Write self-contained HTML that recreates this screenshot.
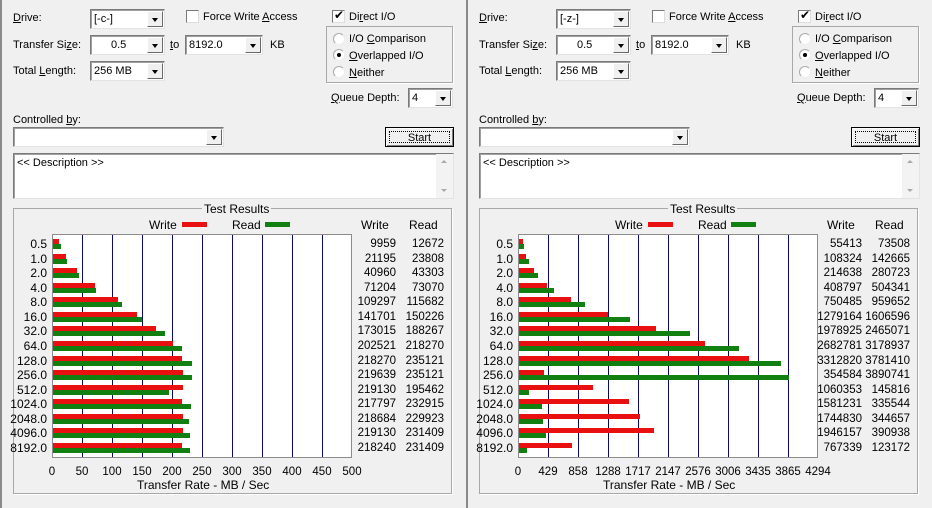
<!DOCTYPE html>
<html><head><meta charset="utf-8"><style>
*{margin:0;padding:0;box-sizing:border-box}
body{width:932px;height:508px;background:#f0f0f0;font-family:"Liberation Sans",sans-serif;font-size:11px;color:#000;position:relative;overflow:hidden}
.p{position:absolute;top:0;width:466px;height:508px;border-left:2px solid #8a8a8a}
.in{position:absolute;left:-2px;top:0;width:466px;height:508px}
.a{position:absolute;white-space:nowrap;line-height:14px}
.cb{position:absolute;background:#fff;border:1px solid #7a7a7a;border-right-color:#e3e3e3;border-bottom-color:#e3e3e3;box-shadow:inset 1px 1px 0 #a0a0a0}
.cb span{position:absolute;left:3px;top:2px;line-height:14px}
.cb i{position:absolute;right:1px;top:1px;bottom:1px;width:16px;background:#f0f0f0;border:1px solid;border-color:#fff #6a6a6a #6a6a6a #fff}
.cb i:after{content:"";position:absolute;left:4px;top:6px;border:3px solid transparent;border-top:4px solid #000;border-bottom:0}
.chk{position:absolute;width:13px;height:13px;background:#fff;border:1px solid #7a7a7a;border-right-color:#ddd;border-bottom-color:#ddd}
.rd{position:absolute;width:12px;height:12px;border-radius:50%;background:#fff;border:1px solid #aaa;border-right-color:#eee;border-bottom-color:#eee}
u{text-decoration:underline}
.plot{position:absolute;left:52px;top:234px;width:300px;height:224px;background:#fff;border:1px solid #8c8c8c}
.g{position:absolute;top:0;bottom:0;width:1px;background:#0a0a70}
.w{position:absolute;height:5px;background:#e81010;left:53px}
.r{position:absolute;height:5px;background:#118011;left:53px}
.lb{position:absolute;right:419px;white-space:nowrap;line-height:14px;font-size:12px}
.v1{position:absolute;right:70px;line-height:14px;font-size:11.5px}
.v2{position:absolute;right:22px;line-height:14px;font-size:11.5px}
.ax{position:absolute;top:465px;width:40px;margin-left:-20px;text-align:center;line-height:14px;font-size:11.5px}
</style></head><body>

<!-- LEFT PANEL -->
<div class="p" style="left:0">
<div class="in">
<div class="a" style="left:13px;top:11px"><u>D</u>rive:</div>
<div class="cb" style="left:90px;top:9px;width:75px;height:20px"><span>[-c-]</span><i></i></div>
<div class="chk" style="left:186px;top:10px"></div>
<div class="a" style="left:203px;top:10px">Force Write <u>A</u>ccess</div>
<div class="chk" style="left:332px;top:10px"><div style="position:absolute;left:1px;top:-3px;font-size:12px;line-height:14px">✔</div></div>
<div class="a" style="left:349px;top:10px">Di<u>r</u>ect I/O</div>
<div style="position:absolute;left:326px;top:26px;width:127px;height:57px;border:1px solid #a8a8a8;box-shadow:1px 1px 0 #fff"></div>
<div class="rd" style="left:333px;top:33px"></div><div class="a" style="left:349px;top:32px">I/O <u>C</u>omparison</div>
<div class="rd" style="left:333px;top:49px"><div style="position:absolute;left:3px;top:3px;width:4px;height:4px;border-radius:50%;background:#000"></div></div><div class="a" style="left:349px;top:49px"><u>O</u>verlapped I/O</div>
<div class="rd" style="left:333px;top:66px"></div><div class="a" style="left:349px;top:66px"><u>N</u>either</div>
<div class="a" style="left:13px;top:38px">Transfer Si<u>z</u>e:</div>
<div class="cb" style="left:90px;top:35px;width:75px;height:20px"><span style="left:20px">0.5</span><i></i></div>
<div class="a" style="left:170px;top:38px"><u>t</u>o</div>
<div class="cb" style="left:185px;top:35px;width:78px;height:20px"><span>8192.0</span><i></i></div>
<div class="a" style="left:270px;top:38px">KB</div>
<div class="a" style="left:13px;top:64px">Total <u>L</u>ength:</div>
<div class="cb" style="left:90px;top:61px;width:75px;height:20px"><span>256 MB</span><i></i></div>
<div class="a" style="left:331px;top:91px"><u>Q</u>ueue Depth:</div>
<div class="cb" style="left:408px;top:88px;width:45px;height:20px"><span>4</span><i></i></div>
<div class="a" style="left:13px;top:113px">Controlled <u>b</u>y:</div>
<div class="cb" style="left:13px;top:127px;width:211px;height:20px"><span></span><i></i></div>
<div style="position:absolute;left:385px;top:127px;width:69px;height:20px;border:1px solid #000;background:#f0f0f0;box-shadow:inset 1px 1px 0 #fff,inset -1px -1px 0 #808080"><div style="position:absolute;left:3px;top:3px;right:3px;bottom:3px;border:1px dotted #000;text-align:center;line-height:12px">Start</div></div>
<div class="cb" style="left:13px;top:153px;width:441px;height:46px;box-shadow:inset 1px 1px 0 #a0a0a0"><span style="top:2px">&lt;&lt; Description &gt;&gt;</span>
<div style="position:absolute;right:0;top:0;bottom:0;width:17px;background:#f3f3f3"><div style="position:absolute;left:5px;top:6px;border:3px solid transparent;border-bottom:3px solid #aaa;border-top:0"></div><div style="position:absolute;left:5px;bottom:6px;border:3px solid transparent;border-top:3px solid #aaa;border-bottom:0"></div></div></div>
<div style="position:absolute;left:13px;top:208px;width:439px;height:286px;border:1px solid #a8a8a8;box-shadow:1px 1px 0 #fff"></div>
<div class="a" style="left:202px;top:202px;background:#f0f0f0;padding:0 2px;font-size:12px">Test Results</div>
<div class="a" style="left:149px;top:218px;font-size:12px">Write</div><div style="position:absolute;left:182px;top:222px;width:25px;height:5px;background:#e81010"></div>
<div class="a" style="left:232px;top:218px;font-size:12px">Read</div><div style="position:absolute;left:265px;top:222px;width:25px;height:5px;background:#118011"></div>
<div class="a" style="left:361px;top:218px;font-size:12px">Write</div><div class="a" style="left:409px;top:218px;font-size:12px">Read</div>
<div class="plot"><div class="g" style="left:29px"></div><div class="g" style="left:59px"></div><div class="g" style="left:89px"></div><div class="g" style="left:119px"></div><div class="g" style="left:149px"></div><div class="g" style="left:179px"></div><div class="g" style="left:209px"></div><div class="g" style="left:239px"></div><div class="g" style="left:269px"></div></div>
<div class="w" style="top:239px;width:6px"></div><div class="r" style="top:244px;width:8px"></div>
<div class="w" style="top:254px;width:13px"></div><div class="r" style="top:259px;width:14px"></div>
<div class="w" style="top:268px;width:24px"></div><div class="r" style="top:273px;width:26px"></div>
<div class="w" style="top:283px;width:42px"></div><div class="r" style="top:288px;width:43px"></div>
<div class="w" style="top:297px;width:65px"></div><div class="r" style="top:302px;width:69px"></div>
<div class="w" style="top:312px;width:84px"></div><div class="r" style="top:317px;width:89px"></div>
<div class="w" style="top:326px;width:103px"></div><div class="r" style="top:331px;width:112px"></div>
<div class="w" style="top:341px;width:120px"></div><div class="r" style="top:346px;width:129px"></div>
<div class="w" style="top:356px;width:129px"></div><div class="r" style="top:361px;width:139px"></div>
<div class="w" style="top:370px;width:130px"></div><div class="r" style="top:375px;width:139px"></div>
<div class="w" style="top:385px;width:130px"></div><div class="r" style="top:390px;width:116px"></div>
<div class="w" style="top:399px;width:129px"></div><div class="r" style="top:404px;width:138px"></div>
<div class="w" style="top:414px;width:130px"></div><div class="r" style="top:419px;width:136px"></div>
<div class="w" style="top:428px;width:130px"></div><div class="r" style="top:433px;width:137px"></div>
<div class="w" style="top:443px;width:129px"></div><div class="r" style="top:448px;width:137px"></div>
<div class="lb" style="top:237px">0.5</div><div class="v1" style="top:237px">9959</div><div class="v2" style="top:237px">12672</div>
<div class="lb" style="top:252px">1.0</div><div class="v1" style="top:252px">21195</div><div class="v2" style="top:252px">23808</div>
<div class="lb" style="top:266px">2.0</div><div class="v1" style="top:266px">40960</div><div class="v2" style="top:266px">43303</div>
<div class="lb" style="top:281px">4.0</div><div class="v1" style="top:281px">71204</div><div class="v2" style="top:281px">73070</div>
<div class="lb" style="top:295px">8.0</div><div class="v1" style="top:295px">109297</div><div class="v2" style="top:295px">115682</div>
<div class="lb" style="top:310px">16.0</div><div class="v1" style="top:310px">141701</div><div class="v2" style="top:310px">150226</div>
<div class="lb" style="top:324px">32.0</div><div class="v1" style="top:324px">173015</div><div class="v2" style="top:324px">188267</div>
<div class="lb" style="top:339px">64.0</div><div class="v1" style="top:339px">202521</div><div class="v2" style="top:339px">218270</div>
<div class="lb" style="top:354px">128.0</div><div class="v1" style="top:354px">218270</div><div class="v2" style="top:354px">235121</div>
<div class="lb" style="top:368px">256.0</div><div class="v1" style="top:368px">219639</div><div class="v2" style="top:368px">235121</div>
<div class="lb" style="top:383px">512.0</div><div class="v1" style="top:383px">219130</div><div class="v2" style="top:383px">195462</div>
<div class="lb" style="top:397px">1024.0</div><div class="v1" style="top:397px">217797</div><div class="v2" style="top:397px">232915</div>
<div class="lb" style="top:412px">2048.0</div><div class="v1" style="top:412px">218684</div><div class="v2" style="top:412px">229923</div>
<div class="lb" style="top:426px">4096.0</div><div class="v1" style="top:426px">219130</div><div class="v2" style="top:426px">231409</div>
<div class="lb" style="top:441px">8192.0</div><div class="v1" style="top:441px">218240</div><div class="v2" style="top:441px">231409</div>
<div class="ax" style="left:52px">0</div><div class="ax" style="left:82px">50</div><div class="ax" style="left:112px">100</div><div class="ax" style="left:142px">150</div><div class="ax" style="left:172px">200</div><div class="ax" style="left:202px">250</div><div class="ax" style="left:232px">300</div><div class="ax" style="left:262px">350</div><div class="ax" style="left:292px">400</div><div class="ax" style="left:322px">450</div><div class="ax" style="left:352px">500</div>
<div class="a" style="left:137px;top:478px;font-size:12px">Transfer Rate - MB / Sec</div>
</div></div>

<!-- RIGHT PANEL -->
<div class="p" style="left:466px">
<div class="in">
<div class="a" style="left:13px;top:11px"><u>D</u>rive:</div>
<div class="cb" style="left:90px;top:9px;width:75px;height:20px"><span>[-z-]</span><i></i></div>
<div class="chk" style="left:186px;top:10px"></div>
<div class="a" style="left:203px;top:10px">Force Write <u>A</u>ccess</div>
<div class="chk" style="left:332px;top:10px"><div style="position:absolute;left:1px;top:-3px;font-size:12px;line-height:14px">✔</div></div>
<div class="a" style="left:349px;top:10px">Di<u>r</u>ect I/O</div>
<div style="position:absolute;left:326px;top:26px;width:127px;height:57px;border:1px solid #a8a8a8;box-shadow:1px 1px 0 #fff"></div>
<div class="rd" style="left:333px;top:33px"></div><div class="a" style="left:349px;top:32px">I/O <u>C</u>omparison</div>
<div class="rd" style="left:333px;top:49px"><div style="position:absolute;left:3px;top:3px;width:4px;height:4px;border-radius:50%;background:#000"></div></div><div class="a" style="left:349px;top:49px"><u>O</u>verlapped I/O</div>
<div class="rd" style="left:333px;top:66px"></div><div class="a" style="left:349px;top:66px"><u>N</u>either</div>
<div class="a" style="left:13px;top:38px">Transfer Si<u>z</u>e:</div>
<div class="cb" style="left:90px;top:35px;width:75px;height:20px"><span style="left:20px">0.5</span><i></i></div>
<div class="a" style="left:170px;top:38px"><u>t</u>o</div>
<div class="cb" style="left:185px;top:35px;width:78px;height:20px"><span>8192.0</span><i></i></div>
<div class="a" style="left:270px;top:38px">KB</div>
<div class="a" style="left:13px;top:64px">Total <u>L</u>ength:</div>
<div class="cb" style="left:90px;top:61px;width:75px;height:20px"><span>256 MB</span><i></i></div>
<div class="a" style="left:331px;top:91px"><u>Q</u>ueue Depth:</div>
<div class="cb" style="left:408px;top:88px;width:45px;height:20px"><span>4</span><i></i></div>
<div class="a" style="left:13px;top:113px">Controlled <u>b</u>y:</div>
<div class="cb" style="left:13px;top:127px;width:211px;height:20px"><span></span><i></i></div>
<div style="position:absolute;left:385px;top:127px;width:69px;height:20px;border:1px solid #000;background:#f0f0f0;box-shadow:inset 1px 1px 0 #fff,inset -1px -1px 0 #808080"><div style="position:absolute;left:3px;top:3px;right:3px;bottom:3px;border:1px dotted #000;text-align:center;line-height:12px">Start</div></div>
<div class="cb" style="left:13px;top:153px;width:441px;height:46px;box-shadow:inset 1px 1px 0 #a0a0a0"><span style="top:2px">&lt;&lt; Description &gt;&gt;</span>
<div style="position:absolute;right:0;top:0;bottom:0;width:17px;background:#f3f3f3"><div style="position:absolute;left:5px;top:6px;border:3px solid transparent;border-bottom:3px solid #aaa;border-top:0"></div><div style="position:absolute;left:5px;bottom:6px;border:3px solid transparent;border-top:3px solid #aaa;border-bottom:0"></div></div></div>
<div style="position:absolute;left:13px;top:208px;width:439px;height:286px;border:1px solid #a8a8a8;box-shadow:1px 1px 0 #fff"></div>
<div class="a" style="left:202px;top:202px;background:#f0f0f0;padding:0 2px;font-size:12px">Test Results</div>
<div class="a" style="left:149px;top:218px;font-size:12px">Write</div><div style="position:absolute;left:182px;top:222px;width:25px;height:5px;background:#e81010"></div>
<div class="a" style="left:232px;top:218px;font-size:12px">Read</div><div style="position:absolute;left:265px;top:222px;width:25px;height:5px;background:#118011"></div>
<div class="a" style="left:361px;top:218px;font-size:12px">Write</div><div class="a" style="left:409px;top:218px;font-size:12px">Read</div>
<div class="plot"><div class="g" style="left:29px"></div><div class="g" style="left:59px"></div><div class="g" style="left:89px"></div><div class="g" style="left:119px"></div><div class="g" style="left:149px"></div><div class="g" style="left:179px"></div><div class="g" style="left:209px"></div><div class="g" style="left:239px"></div><div class="g" style="left:269px"></div></div>
<div class="w" style="top:239px;width:4px"></div><div class="r" style="top:244px;width:5px"></div>
<div class="w" style="top:254px;width:7px"></div><div class="r" style="top:259px;width:10px"></div>
<div class="w" style="top:268px;width:15px"></div><div class="r" style="top:273px;width:19px"></div>
<div class="w" style="top:283px;width:28px"></div><div class="r" style="top:288px;width:35px"></div>
<div class="w" style="top:297px;width:52px"></div><div class="r" style="top:302px;width:66px"></div>
<div class="w" style="top:312px;width:89px"></div><div class="r" style="top:317px;width:111px"></div>
<div class="w" style="top:326px;width:137px"></div><div class="r" style="top:331px;width:171px"></div>
<div class="w" style="top:341px;width:186px"></div><div class="r" style="top:346px;width:220px"></div>
<div class="w" style="top:356px;width:230px"></div><div class="r" style="top:361px;width:262px"></div>
<div class="w" style="top:370px;width:25px"></div><div class="r" style="top:375px;width:270px"></div>
<div class="w" style="top:385px;width:74px"></div><div class="r" style="top:390px;width:10px"></div>
<div class="w" style="top:399px;width:110px"></div><div class="r" style="top:404px;width:23px"></div>
<div class="w" style="top:414px;width:121px"></div><div class="r" style="top:419px;width:24px"></div>
<div class="w" style="top:428px;width:135px"></div><div class="r" style="top:433px;width:27px"></div>
<div class="w" style="top:443px;width:53px"></div><div class="r" style="top:448px;width:8px"></div>
<div class="lb" style="top:237px">0.5</div><div class="v1" style="top:237px">55413</div><div class="v2" style="top:237px">73508</div>
<div class="lb" style="top:252px">1.0</div><div class="v1" style="top:252px">108324</div><div class="v2" style="top:252px">142665</div>
<div class="lb" style="top:266px">2.0</div><div class="v1" style="top:266px">214638</div><div class="v2" style="top:266px">280723</div>
<div class="lb" style="top:281px">4.0</div><div class="v1" style="top:281px">408797</div><div class="v2" style="top:281px">504341</div>
<div class="lb" style="top:295px">8.0</div><div class="v1" style="top:295px">750485</div><div class="v2" style="top:295px">959652</div>
<div class="lb" style="top:310px">16.0</div><div class="v1" style="top:310px">1279164</div><div class="v2" style="top:310px">1606596</div>
<div class="lb" style="top:324px">32.0</div><div class="v1" style="top:324px">1978925</div><div class="v2" style="top:324px">2465071</div>
<div class="lb" style="top:339px">64.0</div><div class="v1" style="top:339px">2682781</div><div class="v2" style="top:339px">3178937</div>
<div class="lb" style="top:354px">128.0</div><div class="v1" style="top:354px">3312820</div><div class="v2" style="top:354px">3781410</div>
<div class="lb" style="top:368px">256.0</div><div class="v1" style="top:368px">354584</div><div class="v2" style="top:368px">3890741</div>
<div class="lb" style="top:383px">512.0</div><div class="v1" style="top:383px">1060353</div><div class="v2" style="top:383px">145816</div>
<div class="lb" style="top:397px">1024.0</div><div class="v1" style="top:397px">1581231</div><div class="v2" style="top:397px">335544</div>
<div class="lb" style="top:412px">2048.0</div><div class="v1" style="top:412px">1744830</div><div class="v2" style="top:412px">344657</div>
<div class="lb" style="top:426px">4096.0</div><div class="v1" style="top:426px">1946157</div><div class="v2" style="top:426px">390938</div>
<div class="lb" style="top:441px">8192.0</div><div class="v1" style="top:441px">767339</div><div class="v2" style="top:441px">123172</div>
<div class="ax" style="left:52px">0</div><div class="ax" style="left:82px">429</div><div class="ax" style="left:112px">858</div><div class="ax" style="left:142px">1288</div><div class="ax" style="left:172px">1717</div><div class="ax" style="left:202px">2147</div><div class="ax" style="left:232px">2576</div><div class="ax" style="left:262px">3006</div><div class="ax" style="left:292px">3435</div><div class="ax" style="left:322px">3865</div><div class="ax" style="left:352px">4294</div>
<div class="a" style="left:137px;top:478px;font-size:12px">Transfer Rate - MB / Sec</div>
</div></div>
</body></html>
